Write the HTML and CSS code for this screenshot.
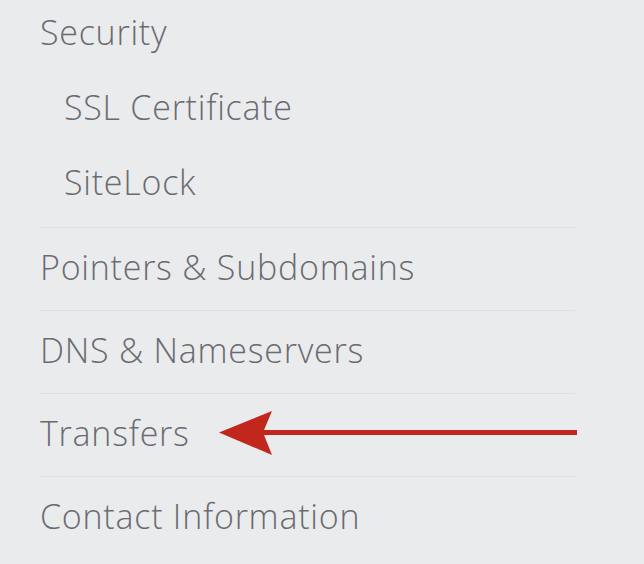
FILE: index.html
```html
<!DOCTYPE html>
<html lang="en">
<head>
    <meta charset="UTF-8">
    <meta name="viewport" content="width=device-width, initial-scale=1.0">
    <title>Domain Menu</title>
    <link rel="stylesheet" href="styles.css">
</head>
<body>
    <!-- Side menu -->
    <nav class="side-menu">
        <ul class="menu">
            <li class="menu-group">
                <a href="#" class="menu-link group-title">Security</a>
                <ul class="sub-menu">
                    <li><a href="#" class="sub-link">SSL Certificate</a></li>
                    <li><a href="#" class="sub-link">SiteLock</a></li>
                </ul>
            </li>
            <li class="menu-item"><a href="#" class="menu-link">Pointers &amp; Subdomains</a></li>
            <li class="menu-item"><a href="#" class="menu-link">DNS &amp; Nameservers</a></li>
            <li class="menu-item has-arrow">
                <a href="#" class="menu-link">Transfers</a>
                <svg class="pointer-arrow" width="358" height="44" viewBox="0 0 358 44">
                    <line x1="40" y1="21.5" x2="358" y2="21.5" stroke="#c1271d" stroke-width="5"/>
                    <path d="M0 21.5 L53 0 L44 21.5 L53 44 Z" fill="#c1271d"/>
                </svg>
            </li>
            <li class="menu-item"><a href="#" class="menu-link">Contact Information</a></li>
        </ul>
    </nav>
</body>
</html>
```

FILE: styles.css
```css
body {
    margin: 0;
    background-color: #eaebed;
    font-family: "Open Sans", Arial, sans-serif;
    font-weight: 300;
    color: #6a6b70;
}
.side-menu {
    padding-left: 40px;
}
.menu, .sub-menu {
    list-style: none;
    margin: 0;
    padding: 0;
}
.menu {
    width: 535px;
}
.menu-link, .sub-link {
    display: block;
    color: inherit;
    text-decoration: none;
    font-size: 34px;
    line-height: 40px;
    letter-spacing: 0.75px;
}
.menu-group {
    padding: 12px 0 25px;
}
.sub-menu li {
    margin-top: 35px;
}
.sub-link {
    padding-left: 24px;
}
.menu-item {
    border-top: 1px solid #dfe0e2;
    padding: 19px 0 23px;
}
.has-arrow {
    position: relative;
}
.pointer-arrow {
    position: absolute;
    left: 179px;
    top: 17px;
}
```
